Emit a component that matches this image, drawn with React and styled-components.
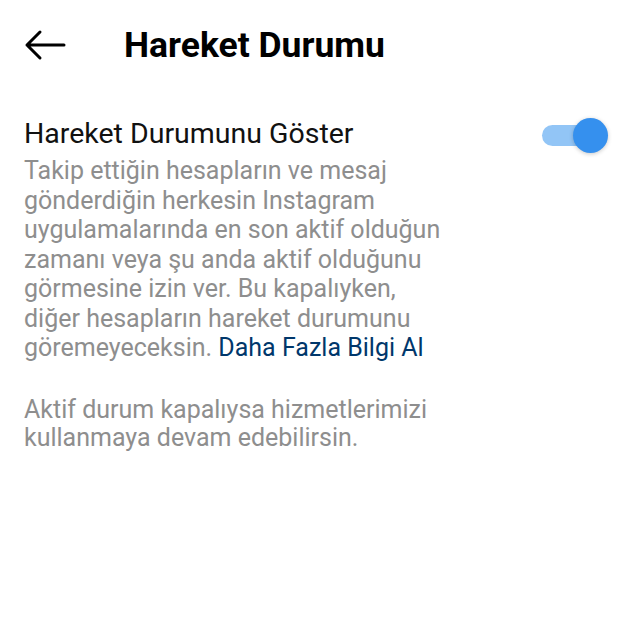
import React, { useState } from 'react';
import styled, { createGlobalStyle } from 'styled-components';

const Global = createGlobalStyle`
  html, body {
    margin: 0;
    padding: 0;
    background: #ffffff;
    font-family: Roboto, "Noto Sans", sans-serif;
  }
`;

const Page = styled.div`
  width: 640px;
  height: 640px;
  background: #fff;
  overflow: hidden;
`;

const Header = styled.div`
  display: flex;
  align-items: center;
  height: 90px;
  padding-left: 24px;
`;

const BackButton = styled.div`
  display: flex;
  align-items: center;
  width: 42px;
  height: 32px;
  margin-right: 58px;
`;

const Title = styled.h1`
  margin: 0;
  font-size: 35.5px;
  font-weight: 700;
  color: #000;
`;

const Section = styled.div`
  display: flex;
  align-items: flex-start;
  justify-content: space-between;
  padding: 28px 44px 0 24px;
`;

const TextCol = styled.div`
  display: flex;
  flex-direction: column;
`;

const Label = styled.div`
  font-size: 28.5px;
  color: #111;
  line-height: 32px;
  margin-bottom: 6px;
`;

const Desc = styled.p`
  margin: 0;
  font-size: 25px;
  line-height: 29.5px;
  color: #8e8e8e;
`;

const Link = styled.span`
  color: #00376b;
`;

const Note = styled(Desc)`
  margin-top: 33px;
  line-height: 28.5px;
`;

const Track = styled.div`
  position: relative;
  width: 54px;
  height: 21px;
  margin-top: 7px;
  border-radius: 11px;
  background: ${p => (p.$on ? '#92c5f6' : '#d0d0d0')};
  cursor: pointer;
`;

const Knob = styled.div`
  position: absolute;
  top: -7px;
  left: ${p => (p.$on ? '31px' : '-4px')};
  width: 35px;
  height: 35px;
  border-radius: 50%;
  background: ${p => (p.$on ? '#3590ee' : '#f5f5f5')};
  box-shadow: 0 1px 4px rgba(0, 0, 0, 0.22);
`;

export default function App() {
  const [on, setOn] = useState(true);
  return (
    <Page>
      <Global />
      <Header>
        <BackButton>
          <svg width="42" height="32" viewBox="0 0 42 32" fill="none">
            <path d="M40 16H3M16 3L3 16l13 13" stroke="#000" strokeWidth="3" strokeLinecap="round" strokeLinejoin="round" />
          </svg>
        </BackButton>
        <Title>Hareket Durumu</Title>
      </Header>
      <Section>
        <TextCol>
          <Label>Hareket Durumunu Göster</Label>
          <Desc>
            Takip ettiğin hesapların ve mesaj<br />
            gönderdiğin herkesin Instagram<br />
            uygulamalarında en son aktif olduğun<br />
            zamanı veya şu anda aktif olduğunu<br />
            görmesine izin ver. Bu kapalıyken,<br />
            diğer hesapların hareket durumunu<br />
            göremeyeceksin. <Link>Daha Fazla Bilgi Al</Link>
          </Desc>
          <Note>
            Aktif durum kapalıysa hizmetlerimizi<br />
            kullanmaya devam edebilirsin.
          </Note>
        </TextCol>
        <Track $on={on} onClick={() => setOn(!on)}>
          <Knob $on={on} />
        </Track>
      </Section>
    </Page>
  );
}
